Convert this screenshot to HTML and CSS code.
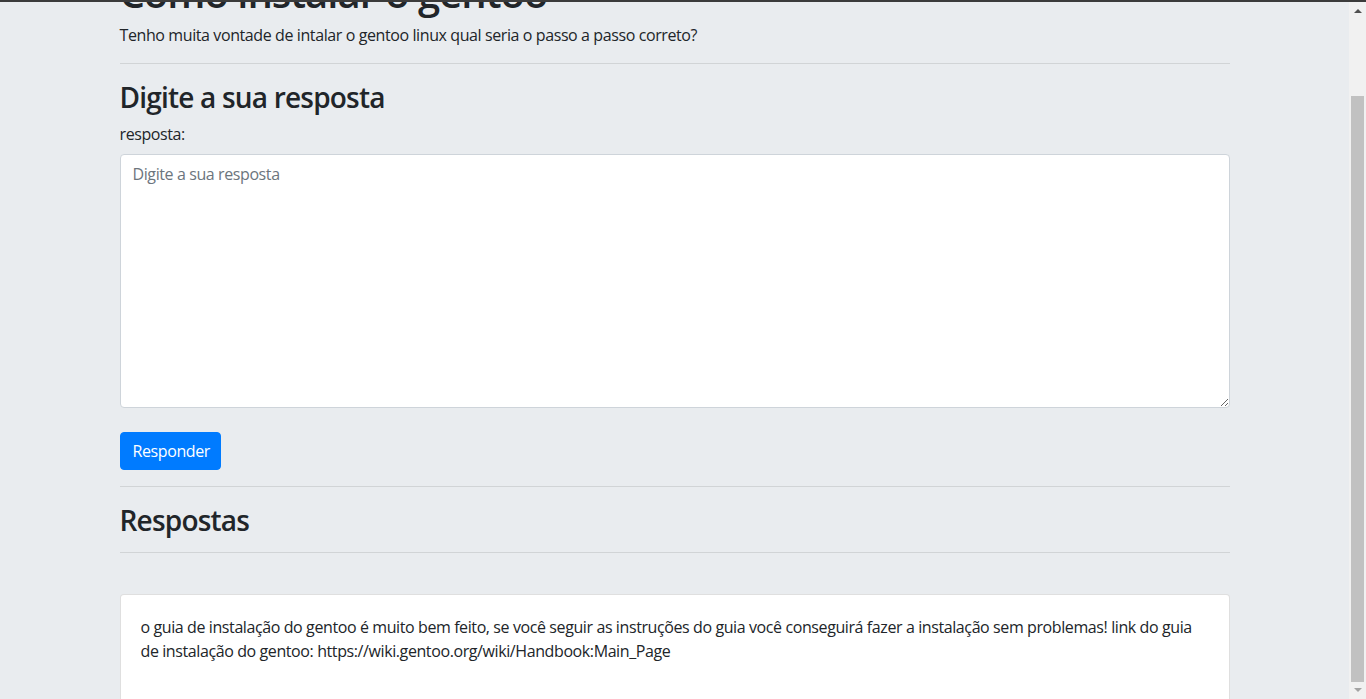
FILE: index.html
```html
<!DOCTYPE html>
<html lang="pt-BR">
<head>
<meta charset="utf-8">
<title>Como instalar o gentoo</title>
<link rel="stylesheet" href="styles.css">
</head>
<body>
<div class="frame">
  <div class="topline"></div>
  <div class="window">
    <main class="page">
      <div class="container">
        <h1 class="title">Como instalar o gentoo</h1>
        <p class="question">Tenho muita vontade de intalar o gentoo linux qual seria o passo a passo correto?</p>
        <hr class="rule">
        <h3 class="section-title">Digite a sua resposta</h3>
        <form class="answer-form">
          <label class="field-label" for="resposta">resposta:</label>
          <textarea class="field-input" id="resposta" placeholder="Digite a sua resposta"></textarea>
          <button class="btn-primary" type="button">Responder</button>
        </form>
        <hr class="rule">
        <h3 class="section-title answers-title">Respostas</h3>
        <hr class="rule rule-answers">
        <div class="card">
          <div class="card-body">o guia de instalação do gentoo é muito bem feito, se você seguir as instruções do guia você conseguirá fazer a instalação sem problemas! link do guia de instalação do gentoo: https://wiki.gentoo.org/wiki/Handbook:Main_Page</div>
        </div>
      </div>
    </main>
    <div class="scrollbar" aria-hidden="true">
      <span class="arrow arrow-up"></span>
      <div class="track"><div class="thumb"></div></div>
      <span class="arrow arrow-down"></span>
    </div>
  </div>
</div>
</body>
</html>
```

FILE: styles.css
```css
* { box-sizing: border-box; }

html, body {
  margin: 0;
  padding: 0;
  height: 100%;
  overflow: hidden;
}

body {
  font-family: "Open Sans", "Noto Sans", "Liberation Sans", sans-serif;
  font-size: 16px;
  line-height: 24px;
  letter-spacing: -0.4px;
  color: #212529;
  background: #e9ecef;
}

.frame {
  display: flex;
  flex-direction: column;
  height: 699px;
}

.topline {
  height: 2px;
  flex: none;
  background: #3b3b3b;
}

.window {
  flex: 1;
  display: flex;
  min-height: 0;
}

.page {
  flex: 1;
  overflow: hidden;
  background: #e9ecef;
}

.container {
  width: 1110px;
  margin: 0 auto;
}

.title {
  font-size: 40px;
  line-height: 48px;
  font-weight: 600;
  letter-spacing: -1px;
  margin: -33px 0 6px;
}

.question {
  margin: 0 0 16px;
}

.rule {
  border: 0;
  border-top: 1px solid rgba(0, 0, 0, 0.1);
  margin: 0 0 16px;
  height: 0;
}

.section-title {
  font-size: 28px;
  line-height: 34px;
  font-weight: 600;
  letter-spacing: -0.8px;
  margin: 0 0 8px;
}

.answers-title {
  margin-bottom: 15px;
}

.rule-answers {
  margin-bottom: 41px;
}

.answer-form {
  display: flex;
  flex-direction: column;
  align-items: flex-start;
  margin-bottom: 16px;
}

.field-label {
  display: block;
  margin-bottom: 8px;
}

.field-input {
  display: block;
  width: 100%;
  height: 254px;
  padding: 7px 12px 6px;
  font: inherit;
  letter-spacing: inherit;
  color: #495057;
  background: #fff;
  border: 1px solid #ced4da;
  border-radius: 4px;
  margin: 0 0 24px;
  resize: vertical;
}

.field-input::placeholder {
  color: #6c757d;
  opacity: 1;
}

.btn-primary {
  font: inherit;
  letter-spacing: inherit;
  color: #fff;
  background: #007bff;
  border: 1px solid #007bff;
  border-radius: 4px;
  padding: 6px 12px;
  height: 38px;
  width: 101px;
  cursor: pointer;
}

.card {
  background: #fff;
  border: 1px solid rgba(0, 0, 0, 0.125);
  border-radius: 4px;
}

.card-body {
  padding: 20px;
  min-height: 120px;
}

.scrollbar {
  flex: none;
  width: 17px;
  background: #f1f1f1;
  display: flex;
  flex-direction: column;
  align-items: center;
}

.arrow {
  flex: none;
  width: 0;
  height: 0;
  border-left: 4px solid transparent;
  border-right: 4px solid transparent;
}

.arrow-up {
  margin-top: 7px;
  border-bottom: 4px solid #505050;
}

.arrow-down {
  margin: 4px 0 7px;
  border-top: 4px solid #a3a3a3;
}

.track {
  flex: 1;
  width: 100%;
  display: flex;
  flex-direction: column;
  justify-content: flex-end;
  padding: 0 2px 2px;
}

.thumb {
  height: 586px;
  background: #c1c1c1;
}
```
